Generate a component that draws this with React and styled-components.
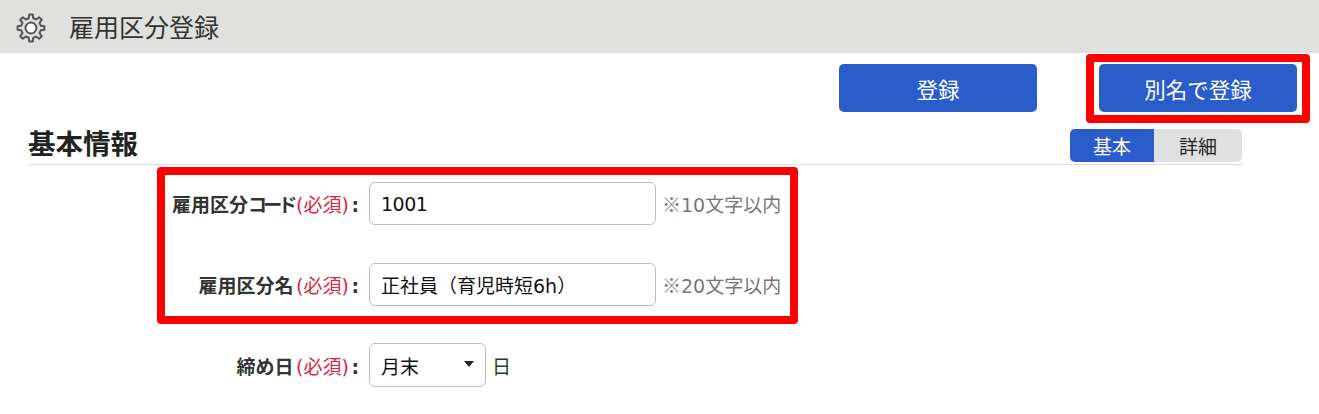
import styled, { createGlobalStyle } from 'styled-components';

const GlobalStyle = createGlobalStyle`
  html, body {
    margin: 0;
    padding: 0;
    background: #fff;
    color: #222;
    font-family: "DejaVu Sans", "Noto Sans CJK JP", sans-serif;
  }
`;

const Page = styled.div`
  width: 1319px;
  height: 414px;
  overflow: hidden;
`;

const TitleBar = styled.header`
  display: flex;
  align-items: center;
  gap: 23px;
  height: 53px;
  padding: 3px 0 0 16px;
  box-sizing: border-box;
  background: #e0e0de;
`;

const Title = styled.h1`
  margin: 0;
  font-size: 25px;
  font-weight: 400;
  line-height: 1;
  color: #333;
`;

const ActionRow = styled.div`
  display: flex;
  justify-content: flex-end;
  align-items: flex-start;
  gap: 49px;
  height: 70px;
  padding: 1px 9px 0 0;
  box-sizing: border-box;
`;

const Highlight = styled.div`
  border: 8px solid #ff0000;
  border-radius: 4px;
  background: #fff;
  padding: ${(p) => p.$padding};
  box-sizing: border-box;
`;

const ActionButton = styled.button`
  display: block;
  width: 198px;
  height: 48px;
  margin-top: ${(p) => p.$top || 0}px;
  padding: 0;
  border: 0;
  border-radius: 5px;
  background: #2a5dca;
  color: #fff;
  font-family: inherit;
  font-size: 21.5px;
  cursor: pointer;
`;

const SectionHead = styled.div`
  display: flex;
  justify-content: space-between;
  align-items: flex-start;
  width: 1214px;
  height: 42px;
  margin-left: 28px;
  padding-top: 6px;
  box-sizing: border-box;
  border-bottom: 1px solid #ddd;
`;

const SectionTitle = styled.h2`
  margin: 0;
  font-size: 27.5px;
  font-weight: 700;
  line-height: 30px;
  color: #222;
`;

const Tabs = styled.div`
  display: flex;
  width: 172px;
  height: 33px;
  border-radius: 5px;
  overflow: hidden;
  background: #e0e0e0;
`;

const Tab = styled.div`
  display: flex;
  align-items: center;
  justify-content: center;
  flex: ${(p) => (p.$active ? '0 0 84px' : '1')};
  font-size: 19px;
  background: ${(p) => (p.$active ? '#2a5dca' : 'transparent')};
  color: ${(p) => (p.$active ? '#fff' : '#222')};
`;

const FormBox = styled(Highlight)`
  width: 641px;
  height: 157px;
  margin: 2px 0 0 157px;
  display: flex;
  flex-direction: column;
  gap: 38px;
`;

const FieldRow = styled.div`
  display: flex;
  align-items: center;
  height: 43px;
`;

const PlainRow = styled(FieldRow)`
  height: 44px;
  margin: 19px 0 0 157px;
  padding-left: 8px;
`;

const Label = styled.label`
  display: block;
  width: 194px;
  font-size: 19px;
  font-weight: 700;
  text-align: right;
  white-space: nowrap;
  color: #333;
`;

const NarrowKana = styled.span`
  letter-spacing: -3.8px;
`;

const Required = styled.span`
  padding: 0 2.5px;
  font-weight: 400;
  color: #e0243c;
`;

const TextInput = styled.div`
  display: flex;
  align-items: center;
  width: 287px;
  height: 100%;
  margin-left: 10px;
  padding-left: 11px;
  box-sizing: border-box;
  border: 1px solid #bdbdbd;
  border-radius: 6px;
  font-size: 19px;
  letter-spacing: ${(p) => (p.$tight ? '-0.5px' : '0')};
  color: #111;
  white-space: nowrap;
`;

const Hint = styled.span`
  margin-left: 6px;
  font-size: 19px;
  color: #777;
  white-space: nowrap;
`;

const HintMark = styled.span`
  font-family: "Noto Sans CJK JP", sans-serif;
`;

const SelectBox = styled(TextInput)`
  justify-content: space-between;
  width: 117px;
  padding-right: 11px;
`;

const Caret = styled.span`
  width: 0;
  height: 0;
  margin-top: -2px;
  border-left: 5.5px solid transparent;
  border-right: 5.5px solid transparent;
  border-top: 6px solid #222;
`;

const Unit = styled.span`
  margin-left: 6px;
  font-size: 19px;
  color: #333;
`;

// 8 tooth gear outline, built from polar points
function gearPath(cx, cy, outer, root, teeth) {
  const step = (Math.PI * 2) / teeth;
  const pts = [];
  for (let i = 0; i < teeth; i++) {
    const a = i * step - Math.PI / 2;
    const at = (r, da) => `${(cx + r * Math.cos(a + da)).toFixed(2)} ${(cy + r * Math.sin(a + da)).toFixed(2)}`;
    pts.push(at(root, -step * 0.3), at(outer, -step * 0.17), at(outer, step * 0.17), at(root, step * 0.3));
  }
  return `M${pts.join('L')}Z`;
}

function GearIcon() {
  return (
    <svg width="30" height="30" viewBox="0 0 30 30" fill="none" stroke="#555" strokeWidth="2" strokeLinejoin="round">
      <path d={gearPath(15, 15, 13.5, 10, 8)} />
      <circle cx="15" cy="15" r="5.5" fill="#fff" />
    </svg>
  );
}

function Field({ label, children }) {
  return (
    <>
      <Label>
        {label}
        <Required>(必須)</Required>:
      </Label>
      {children}
    </>
  );
}

export default function App() {
  return (
    <Page lang="ja">
      <GlobalStyle />
      <TitleBar>
        <GearIcon />
        <Title>雇用区分登録</Title>
      </TitleBar>
      <ActionRow>
        <ActionButton $top={10}>登録</ActionButton>
        <Highlight $padding="2px 5px 3px">
          <ActionButton>別名で登録</ActionButton>
        </Highlight>
      </ActionRow>
      <SectionHead>
        <SectionTitle>基本情報</SectionTitle>
        <Tabs>
          <Tab $active>基本</Tab>
          <Tab>詳細</Tab>
        </Tabs>
      </SectionHead>
      <FormBox $padding="7px 0 0">
        <FieldRow>
          <Field label={<>雇用区分<NarrowKana>コード</NarrowKana></>}>
            <TextInput $tight>1001</TextInput>
            <Hint><HintMark>※</HintMark>10文字以内</Hint>
          </Field>
        </FieldRow>
        <FieldRow>
          <Field label="雇用区分名">
            <TextInput>正社員（育児時短6h）</TextInput>
            <Hint><HintMark>※</HintMark>20文字以内</Hint>
          </Field>
        </FieldRow>
      </FormBox>
      <PlainRow>
        <Field label="締め日">
          <SelectBox>
            月末
            <Caret />
          </SelectBox>
          <Unit>日</Unit>
        </Field>
      </PlainRow>
    </Page>
  );
}
